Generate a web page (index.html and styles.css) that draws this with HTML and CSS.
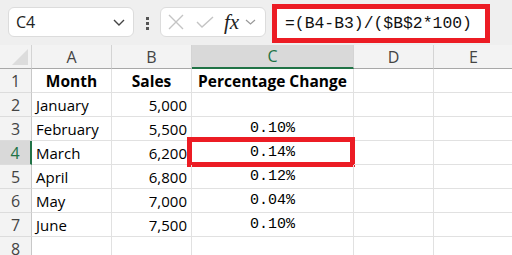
FILE: index.html
```html
<!DOCTYPE html>
<html lang="en">
<head>
    <meta charset="UTF-8">
    <meta name="viewport" content="width=device-width, initial-scale=1.0">
    <title>Percentage Change</title>
    <link rel="stylesheet" href="styles.css">
</head>
<body>
    <div class="toolbar">
        <div class="name-box">
            <span>C4</span>
            <svg class="chev" width="12" height="7" viewBox="0 0 12 7"><path d="M1 1l5 5 5-5" fill="none" stroke="#444" stroke-width="1.4"/></svg>
        </div>
        <div class="grip"><i></i><i></i><i></i></div>
        <div class="fx-box">
            <svg width="16" height="16" viewBox="0 0 16 16"><path d="M1 1l14 14M15 1L1 15" stroke="#c4c4c4" stroke-width="1.4"/></svg>
            <svg width="18" height="12" viewBox="0 0 18 12"><path d="M1 6l5 5L17 1" fill="none" stroke="#c4c4c4" stroke-width="1.4"/></svg>
            <span class="fx">fx</span>
            <svg width="11" height="6" viewBox="0 0 11 6"><path d="M1 1l4.5 4 4.5-4" fill="none" stroke="#999" stroke-width="1.2"/></svg>
        </div>
        <div class="formula">=(B4-B3)/($B$2*100)</div>
    </div>

    <div class="sheet">
        <div class="hd corner"></div>
        <div class="hd">A</div>
        <div class="hd">B</div>
        <div class="hd sel-col">C</div>
        <div class="hd">D</div>
        <div class="hd">E</div>

        <div class="rh">1</div>
        <div class="c bold center">Month</div>
        <div class="c bold center">Sales</div>
        <div class="c bold center">Percentage Change</div>
        <div class="c"></div>
        <div class="c"></div>

        <div class="rh">2</div>
        <div class="c">January</div>
        <div class="c num">5,000</div>
        <div class="c pct"></div>
        <div class="c"></div>
        <div class="c"></div>

        <div class="rh">3</div>
        <div class="c">February</div>
        <div class="c num">5,500</div>
        <div class="c pct">0.10%</div>
        <div class="c"></div>
        <div class="c"></div>

        <div class="rh sel-row">4</div>
        <div class="c">March</div>
        <div class="c num">6,200</div>
        <div class="c pct active">0.14%<span class="mark"></span></div>
        <div class="c"></div>
        <div class="c"></div>

        <div class="rh">5</div>
        <div class="c">April</div>
        <div class="c num">6,800</div>
        <div class="c pct">0.12%</div>
        <div class="c"></div>
        <div class="c"></div>

        <div class="rh">6</div>
        <div class="c">May</div>
        <div class="c num">7,000</div>
        <div class="c pct">0.04%</div>
        <div class="c"></div>
        <div class="c"></div>

        <div class="rh">7</div>
        <div class="c">June</div>
        <div class="c num">7,500</div>
        <div class="c pct">0.10%</div>
        <div class="c"></div>
        <div class="c"></div>

        <div class="rh">8</div>
        <div class="c"></div>
        <div class="c"></div>
        <div class="c"></div>
        <div class="c"></div>
        <div class="c"></div>
    </div>
</body>
</html>
```

FILE: styles.css
```css
body { margin: 0; background: #fff; font-family: "Open Sans", Arial, sans-serif; overflow: hidden; }

/* formula bar */
.toolbar { height: 45px; background: #efefef; display: flex; align-items: flex-start; box-sizing: border-box; }
.name-box { margin: 7px 0 0 8px; width: 126px; height: 30px; box-sizing: border-box; background: #fff; border: 1px solid #dcdcdc; border-radius: 6px; display: flex; align-items: center; justify-content: space-between; padding: 0 6px 0 7px; font-size: 16px; color: #222; }
.name-box .chev { margin-right: 2px; }
.grip { margin: 17px 0 0 12px; width: 3px; display: flex; flex-direction: column; gap: 2px; }
.grip i { display: block; width: 3px; height: 3px; background: #555; }
.fx-box { margin: 7px 0 0 11px; width: 106px; height: 30px; box-sizing: border-box; background: #fff; border: 1px solid #dcdcdc; border-radius: 6px; display: flex; align-items: center; padding-left: 7px; gap: 12px; }
.fx-box .fx { font-family: "Liberation Serif", serif; font-style: italic; font-size: 21px; color: #222; margin-left: -2px; margin-right: -6px; line-height: 1; }
.formula { margin: 4px 0 0 6px; width: 218px; height: 39px; box-sizing: border-box; background: #fff; border: 5px solid #ec1c24; padding: 0 0 0 8px; font-family: "Liberation Mono", monospace; font-size: 16.4px; line-height: 29px; color: #111; }

/* grid */
.sheet { display: grid; grid-template-columns: 32px 80px 80px 162px 80px 80px; grid-template-rows: 24px repeat(8, 24px); }
.sheet > div { box-sizing: border-box; border-right: 1px solid #e1e1e1; border-bottom: 1px solid #e1e1e1; display: flex; align-items: center; white-space: nowrap; position: relative; }
.hd { background: #f3f3f3; justify-content: center; font-size: 16px; color: #444; border-right-color: #d4d4d4 !important; border-bottom: 1px solid #a8a8a8 !important; }
.corner { background: #f3f3f3; }
.corner::after { content: ""; position: absolute; right: 3px; bottom: 3px; border-left: 16px solid transparent; border-bottom: 16px solid #dcdcdc; }
.rh { background: #f3f3f3; justify-content: center; font-size: 16px; color: #444; border-right: 1px solid #c8c8c8 !important; border-bottom-color: #dcdcdc !important; }
.sel-col { background: #d9d9d9; color: #217346; border-bottom: 2px solid #217346 !important; }
.sel-row { background: #d9d9d9; color: #217346; border-right: 2px solid #217346 !important; }
.c { font-size: 15px; color: #000; padding: 0 4px; }
.bold { font-weight: bold; font-size: 15.5px; }
.center { justify-content: center; }
.num { justify-content: flex-end; }
.pct { justify-content: center; font-family: "Liberation Mono", monospace; font-size: 15px; }
.active .mark { position: absolute; left: -5px; right: -2px; top: -4px; bottom: -3px; border: 5px solid #ec1c24; }
```
